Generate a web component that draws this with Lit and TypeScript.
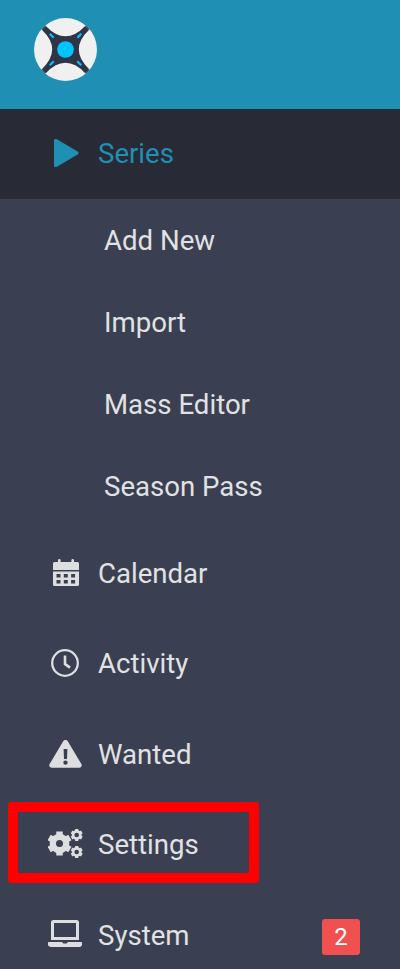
import { LitElement, html, css, svg } from "lit";
import { customElement } from "lit/decorators.js";

const calendar = svg`<path fill-rule="evenodd" d="M1.500 3H5V1.300a1.300 1.300 0 0 1 2.600 0V3h10.800V1.300a1.300 1.300 0 0 1 2.600 0V3h3.500A1.500 1.500 0 0 1 26 4.500V11H0V4.500A1.500 1.500 0 0 1 1.500 3ZM0 12.500h26V25.500A1.500 1.500 0 0 1 24.500 27H1.500A1.500 1.500 0 0 1 0 25.500ZM3.500 15v3.500h4V15Zm7.300 0v3.500h4V15Zm7.300 0v3.500h4V15ZM3.500 21v3.500h4V21Zm7.300 0v3.500h4V21Zm7.300 0v3.500h4V21Z"/>`;
const clock = svg`<circle cx="14" cy="14" r="12.800" fill="none" stroke="currentColor" stroke-width="2.300"/><path d="M14 6.500V15l5 3.600" fill="none" stroke="currentColor" stroke-width="2.600"/>`;
const warn = svg`<path fill-rule="evenodd" d="M16.500 0c1 0 1.800.5 2.300 1.300l13.600 22.800c.9 1.700-.2 3.700-2.200 3.700H2.800C.8 27.800-.3 25.800.6 24.100L14.200 1.300C14.700.5 15.500 0 16.500 0ZM14.600 9l.4 10h3l.4-10ZM16.500 20.400a2.200 2.200 0 1 0 0 4.400 2.200 2.200 0 0 0 0-4.400Z"/>`;
const gear = (cx: number, cy: number, r: number, hole: number) => {
  const teeth = [];
  for (let a = 0; a < 6; a++) {
    teeth.push(svg`<rect x=${cx - r * 0.27} y=${cy - r} width=${r * 0.54} height=${r * 0.5} transform="rotate(${a * 60} ${cx} ${cy})"/>`);
  }
  return svg`<g>${teeth}</g><circle cx=${cx} cy=${cy} r=${(r * 0.82 + hole) / 2} fill="none" stroke="currentColor" stroke-width=${r * 0.82 - hole}/>`;
};
const cogs = svg`${gear(11.5, 14.5, 12, 3.5)}${gear(28.7, 6, 6, 2.3)}${gear(28.7, 23, 6, 2.3)}`;
const laptop = svg`<path fill-rule="evenodd" d="M5.500 0h23A2.500 2.500 0 0 1 31 2.500V20H3V2.500A2.500 2.500 0 0 1 5.500 0ZM6 3v14h22V3ZM.8 22h13.400c.2.900 1 1.500 1.800 1.500h2c.8 0 1.600-.6 1.800-1.500h13.400a.8.8 0 0 1 .8.8v1.700c0 1.400-1.100 2.500-2.500 2.500h-28C1.100 27 0 25.900 0 24.500v-1.700a.8.8 0 0 1 .8-.8Z"/>`;

@customElement("app-root")
export class AppRoot extends LitElement {
  static styles = css`
    :host { display: block; position: relative; width: 400px; height: 969px; overflow: hidden; background: #3a3f51; font-family: Roboto, "Liberation Sans", sans-serif; font-size: 27.6px; color: #e1e2e3; }
    .head { height: 109px; background: #1f8fb4; display: flex; align-items: center; padding-left: 34px; box-sizing: border-box; padding-bottom: 10px; }
    .head svg { width: 63px; height: 63px; display: block; }
    .row { display: flex; align-items: center; height: 90.5px; box-sizing: border-box; }
    .ico { width: 98px; flex: none; display: flex; justify-content: flex-start; box-sizing: border-box; }
    .ico svg { display: block; fill: currentColor; color: #dddee0; }
    .active { height: 90px; background: #282a36; color: #1f8fb4; padding-bottom: 2px; }
    .active .ico svg { color: #1f8fb4; }
    .sub { display: flex; align-items: center; height: 82px; padding-left: 104px; }
    .subs { padding-bottom: 1px; }
    .grow { flex: 1; }
    .badge { width: 38px; height: 36px; margin: 3px 40px 0 0; background: #f05050; color: #fff; border-radius: 3px; display: flex; align-items: center; justify-content: center; font-size: 24px; }
    .mark { position: absolute; left: 8px; top: 802px; width: 251px; height: 81px; box-sizing: border-box; border: 10px solid #ff0000; border-radius: 3px; }
    .i-play { padding-left: 54px; }
    .i-cal { padding: 0 0 1px 53px; }
    .i-clock { padding: 0 0 2px 51px; }
    .i-warn { padding: 0 0 1px 49px; }
    .i-cogs { padding: 0 0 3px 48px; }
    .i-laptop { padding: 0 0 3px 48px; }
  `;

  render() {
    return html`
      <div class="head">
        <svg viewBox="0 0 64 64">
          <defs><clipPath id="c"><circle cx="32" cy="32" r="32"/></clipPath></defs>
          <circle cx="32" cy="32" r="32" fill="#f0f0f0"/>
          <g clip-path="url(#c)">
            <g transform="translate(32 32)">
              <path d="M-20-24Q0-3 20-24L24-20Q3 0 24 20L20 24Q0 3-20 24L-24 20Q-3 0-24-20Z" fill="#2f3447"/>
              <path d="M-22-22-32-32M22-22 32-32M-22 22-32 32M22 22 32 32" stroke="#2f3447" stroke-width="5.600"/>
              <path d="M-12-12-16-16M12-12 16-16M-12 12-16 16M12 12 16 16" stroke="#00c4ff" stroke-width="2.200"/>
              <circle r="8.500" fill="#00c4ff"/>
            </g>
          </g>
        </svg>
      </div>
      <div class="row active">
        <span class="ico i-play"><svg width="24.500" height="28" viewBox="0 0 24.500 28"><path d="M1 0h1.500L24 12.700c.7.600.7 1.900 0 2.500L2.500 28H1a1 1 0 0 1-1-1V1a1 1 0 0 1 1-1Z"/></svg></span>
        <span>Series</span>
      </div>
      <div class="subs">
        <div class="sub">Add New</div>
        <div class="sub">Import</div>
        <div class="sub">Mass Editor</div>
        <div class="sub">Season Pass</div>
      </div>
      <div class="row">
        <span class="ico i-cal"><svg width="26" height="27" viewBox="0 0 26 27">${calendar}</svg></span>
        <span>Calendar</span>
      </div>
      <div class="row">
        <span class="ico i-clock"><svg width="28" height="28" viewBox="0 0 28 28">${clock}</svg></span>
        <span>Activity</span>
      </div>
      <div class="row">
        <span class="ico i-warn"><svg width="33" height="28" viewBox="0 0 33 28">${warn}</svg></span>
        <span>Wanted</span>
      </div>
      <div class="row">
        <span class="ico i-cogs"><svg width="36" height="29" viewBox="0 0 36 29">${cogs}</svg></span>
        <span>Settings</span>
      </div>
      <div class="row">
        <span class="ico i-laptop"><svg width="36" height="27" viewBox="0 0 36 27">${laptop}</svg></span>
        <span>System</span>
        <span class="grow"></span>
        <span class="badge">2</span>
      </div>
      <div class="mark"></div>
    `;
  }
}
